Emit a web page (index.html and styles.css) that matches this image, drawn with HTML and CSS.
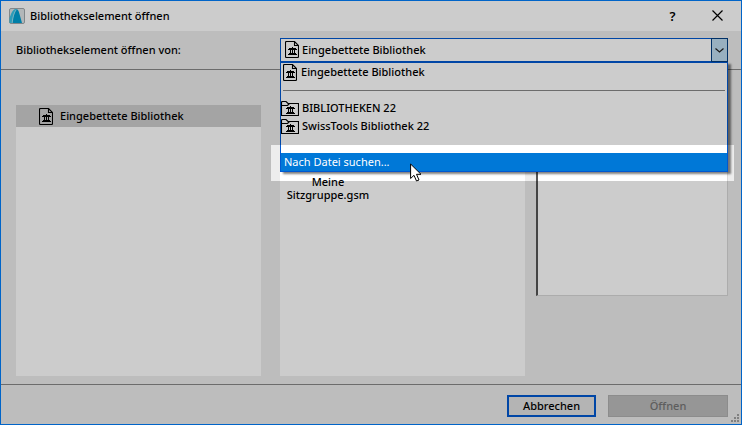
FILE: index.html
```html
<!DOCTYPE html>
<html lang="de">
<head>
    <meta charset="UTF-8">
    <meta name="viewport" content="width=device-width, initial-scale=1.0">
    <title>Bibliothekselement öffnen</title>
    <link rel="stylesheet" href="styles.css">
</head>
<body>
    <!-- Shared icons -->
    <svg class="sprite" aria-hidden="true">
        <symbol id="temple" viewBox="0 0 9 8">
            <path d="M4 0H5V1H8V2H9V3H0V2H1V1H4Z M2 3h1v3H2z M4 3h1v3H4z M6 3h1v3H6z M1 6h7v1H1z M0 7h9v1H0z"/>
        </symbol>
        <symbol id="icon-file" viewBox="0 0 14 17">
            <path d="M2 .5H9.5L13.5 4.5V15.5Q13.5 16.5 12.5 16.5H1.5Q.5 16.5 .5 15.5V1.5Q.5 .5 1.5 .5H2Z M9.5 .5V4.5H13.5" fill="none" stroke="#000" stroke-width="1.1"/>
            <use href="#temple" x="3" y="6" width="9" height="8"/>
        </symbol>
        <symbol id="icon-folder" viewBox="0 0 18 15">
            <path d="M.5 14.5V1.5Q.5 .5 1.5 .5H5L7 2.5H17.5V14.5Z M.5 4.5H6.5L8.5 2.5" fill="none" stroke="#000" stroke-width="1.1"/>
            <use href="#temple" x="5" y="5" width="9" height="8"/>
        </symbol>
    </svg>

    <div class="dialog">
        <header class="titlebar">
            <svg class="logo" viewBox="0 0 16 16" aria-hidden="true">
                <rect x=".5" y=".5" width="15" height="15" rx="1.5" fill="#dfe5e8" stroke="#a2a9ad"/>
                <path d="M.5 15V10Q3 2 6 1H8Q4 5 3 15Z" fill="#39c4e8"/>
                <path d="M3 15Q4 5 7.5 1Q9.5 1.5 10.5 6L13 15Z" fill="#009fd2"/>
                <path d="M3.2 15Q4 6 7.3 1.5" fill="none" stroke="#b8ecf8" stroke-width=".8"/>
            </svg>
            <h1>Bibliothekselement öffnen</h1>
            <button type="button" class="title-button" aria-label="Hilfe">?</button>
            <button type="button" class="title-button" aria-label="Schließen">
                <svg width="11" height="11" viewBox="0 0 11 11"><path d="M.5 .5L10.5 10.5M10.5 .5L.5 10.5" stroke="#000" stroke-width="1.2"/></svg>
            </button>
        </header>

        <div class="source">
            <label for="library">Bibliothekselement öffnen von:</label>
            <div class="combo">
                <svg class="combo-icon icon-file"><use href="#icon-file"/></svg>
                <select id="library">
                    <option>Eingebettete Bibliothek</option>
                    <option>BIBLIOTHEKEN 22</option>
                    <option>SwissTools Bibliothek 22</option>
                </select>
                <span class="combo-arrow">
                    <svg width="9" height="5" viewBox="0 0 9 5"><path d="M.5 .5L4.5 4L8.5 .5" fill="none" stroke="#222" stroke-width="1.2"/></svg>
                </span>
                <ul class="combo-list">
                    <li class="document"><svg class="icon-file"><use href="#icon-file"/></svg>Eingebettete Bibliothek</li>
                    <li class="separator"><hr></li>
                    <li><svg class="icon-folder"><use href="#icon-folder"/></svg>BIBLIOTHEKEN 22</li>
                    <li><svg class="icon-folder"><use href="#icon-folder"/></svg>SwissTools Bibliothek 22</li>
                    <li></li>
                    <li class="active">Nach Datei suchen...
                        <svg class="cursor" viewBox="0 0 12 19"><path d="M.6 1V15.5L4 12.3L6.5 18L9 17L6.5 11.3H11Z" fill="#fff" stroke="#000"/></svg>
                    </li>
                </ul>
            </div>
        </div>

        <main class="content">
            <ul class="tree">
                <li class="selected"><svg class="icon-file"><use href="#icon-file"/></svg>Eingebettete Bibliothek</li>
            </ul>
            <div class="details">
                <div class="files">
                    <div class="file">Meine<br>Sitzgruppe.gsm</div>
                </div>
                <div class="preview"></div>
            </div>
        </main>

        <footer class="buttons">
            <button type="button" class="cancel">Abbrechen</button>
            <button type="button" class="open" disabled>Öffnen</button>
            <svg class="grip" viewBox="0 0 8 8" aria-hidden="true"><path d="M6 0h2v2H6zM3 3h2v2H3zM6 3h2v2H6zM0 6h2v2H0zM3 6h2v2H3zM6 6h2v2H6z" fill="#a0a0a0"/></svg>
        </footer>

        <!-- Dims everything except the highlighted entry -->
        <div class="spotlight"></div>
    </div>
</body>
</html>
```

FILE: styles.css
```css
* {
    box-sizing: border-box;
}
body {
    margin: 0;
    font-family: "Noto Sans", "Open Sans", sans-serif;
    font-size: 11px;
    line-height: 18px;
    color: #000;
}
button, select {
    font: inherit;
    color: inherit;
}
ul {
    margin: 0;
    padding: 0;
    list-style: none;
}
.sprite {
    position: absolute;
    width: 0;
    height: 0;
}
.icon-file {
    width: 14px;
    height: 17px;
}
.icon-folder {
    width: 18px;
    height: 15px;
}
.dialog {
    position: relative;
    display: flex;
    flex-direction: column;
    min-height: 100vh;
    border: 1px solid #0064c8;
    background-color: #ededed;
    overflow: hidden;
}

/* Title bar */
.titlebar {
    display: flex;
    align-items: center;
    height: 30px;
    padding: 0 1px 0 8px;
    background-color: #fff;
}
.logo {
    width: 16px;
    height: 16px;
}
h1 {
    flex: 1;
    margin: 0 0 0 5px;
    font-size: 11px;
    font-weight: 500;
}
.title-button {
    width: 45px;
    height: 30px;
    padding: 0;
    border: none;
    background: none;
    font-size: 13px;
    font-weight: 600;
}

/* Library chooser */
.source {
    display: flex;
    align-items: center;
    gap: 19px;
    height: 39px;
    padding: 0 13px 0 15px;
    border-bottom: 1px solid #888;
}
.source label {
    flex: 245 1 0;
    font-weight: 500;
    white-space: nowrap;
}
.combo {
    position: relative;
    flex: 448 1 0;
}
.combo-icon {
    position: absolute;
    top: 3px;
    left: 5px;
}
select {
    display: block;
    width: 100%;
    height: 24px;
    padding: 0 20px 0 21px;
    border: 1px solid #0058d0;
    border-radius: 0;
    background-color: #fff;
    font-weight: 500;
    appearance: none;
}
.combo-arrow {
    position: absolute;
    top: 0;
    right: 0;
    display: flex;
    align-items: center;
    justify-content: center;
    width: 17px;
    height: 24px;
    border: 1px solid #003c80;
    background-color: #bfdcf0;
    pointer-events: none;
}
.combo-list {
    position: absolute;
    top: 100%;
    left: 0;
    right: 0;
    border: 1px solid #0058d0;
    background-color: #fff;
    box-shadow: 3px 2px 2px rgba(0, 0, 0, 0.5);
    font-weight: 500;
}
.combo-list li {
    display: flex;
    align-items: center;
    gap: 3px;
    height: 18px;
}
.combo-list .document {
    gap: 4px;
    padding-left: 2px;
}
.combo-list .separator {
    padding: 0 2px;
}
hr {
    flex: 1;
    margin: 0;
    border: none;
    border-top: 1px solid #888;
}
.combo-list .active {
    position: relative;
    padding-left: 3px;
    background-color: #0078d7;
    color: #fff;
    font-weight: normal;
}
.cursor {
    position: absolute;
    top: 10px;
    left: 129px;
    z-index: 1;
    width: 12px;
    height: 19px;
}

/* Folder tree, file list and preview */
.content {
    display: flex;
    flex: 1;
    gap: 19px;
    padding: 35px 13px 8px 15px;
}
.tree {
    flex: 245 1 0;
    background-color: #fff;
}
.tree .selected {
    display: flex;
    align-items: center;
    gap: 7px;
    height: 22px;
    padding-left: 23px;
    background-color: #cecece;
    font-weight: 500;
}
.details {
    display: grid;
    flex: 448 1 0;
    grid-template-columns: 245fr 192fr;
    gap: 11px;
}
.files {
    background-color: #fff;
}
.file {
    width: 96px;
    padding-top: 70px;
    font-weight: 500;
    line-height: 13px;
    text-align: center;
}
.preview {
    height: 191px;
    border: 1px solid #d8d8d8;
    border-left: 2px solid #555;
    background-color: #fff;
}

/* Footer */
.buttons {
    position: relative;
    display: flex;
    justify-content: flex-end;
    align-items: center;
    gap: 12px;
    height: 40px;
    padding: 3px 13px 0 15px;
    border-top: 1px solid #888;
}
.buttons button {
    height: 22px;
    padding: 0;
    font-weight: 500;
    line-height: 16px;
}
.buttons .cancel {
    width: 89px;
    border: 2px solid #0058d0;
    background-color: #e1e1e1;
}
.buttons .open {
    width: 120px;
    border: 1px solid #afafaf;
    background-color: #bcbcbc;
    color: #757575;
}
.grip {
    position: absolute;
    right: 2px;
    bottom: 2px;
    width: 8px;
    height: 8px;
}

.spotlight {
    position: absolute;
    top: 144px;
    left: 270px;
    right: 7px;
    height: 36px;
    box-shadow: 0 0 2px 1000px rgba(0, 0, 0, 0.2);
    pointer-events: none;
}
```
